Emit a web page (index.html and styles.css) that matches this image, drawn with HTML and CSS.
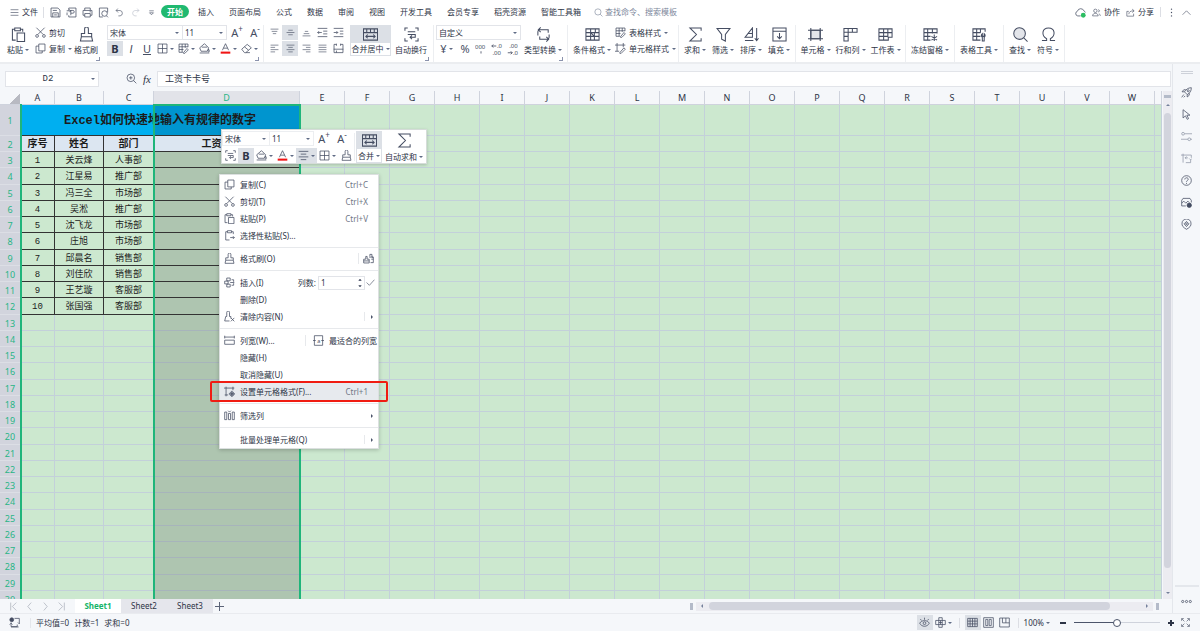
FILE: index.html
```html
<!DOCTYPE html>
<html lang="zh-CN">
<head>
<meta charset="utf-8">
<title>工作表</title>
<link rel="stylesheet" href="styles.css">
</head>
<body>
<svg class="defs" aria-hidden="true">
  <symbol id="menu" viewBox="0 0 16 16"><path d="M1 3h14M1 8h14M1 13h14"/></symbol>
  <symbol id="save" viewBox="0 0 16 16"><path d="M1.500 1.500h10l3 3v10h-13zM4 14.500v-6h8v6M4 5h6M6 11.500h4"/></symbol>
  <symbol id="export" viewBox="0 0 16 16"><path d="M4 5V1.500h10.500v13H4V12M1 5.500h6M5 3.500l2 2-2 2M7 12V5h3a2 2 0 010 4H7M1.500 8v4"/></symbol>
  <symbol id="print" viewBox="0 0 16 16"><path d="M4 5V1.500h8V5M4 12H1.500V5h13v7H12M4 9.500h8v5H4zM11 7h2"/></symbol>
  <symbol id="preview" viewBox="0 0 16 16"><path d="M7 14.500H2v-13h12V8M14.500 15l-2-2"/><circle cx="9.500" cy="9.500" r="4"/></symbol>
  <symbol id="undo" viewBox="0 0 16 16"><path d="M5 1L2 4.500 5.500 8M2 4.500h7a4.800 4.800 0 010 9.500H6"/></symbol>
  <symbol id="redo" viewBox="0 0 16 16"><path d="M11 1l3 3.500L10.500 8M14 4.500H7A4.800 4.800 0 007 14h3"/></symbol>
  <symbol id="more" viewBox="0 0 16 16"><path d="M4 5h8M4.500 8.500h7L8 12z"/></symbol>
  <symbol id="search" viewBox="0 0 16 16"><circle cx="7" cy="7" r="5.500"/><path d="M11 11l4 4"/></symbol>
  <symbol id="find" viewBox="0 0 16 16"><circle cx="7" cy="7" r="6.200" fill="#e3e5ea"/><path d="M11.500 11.500l4 4"/></symbol>
  <symbol id="zoomin" viewBox="0 0 16 16"><circle cx="7" cy="7" r="5.500"/><path d="M11 11l4 4M4.500 7h5M7 4.500v5"/></symbol>
  <symbol id="cloud" viewBox="0 0 16 16"><path d="M8 13H4a3.500 3.500 0 01-.5-6.800 5 5 0 019.500-.5A3.500 3.500 0 0115 8"/><circle cx="12" cy="12" r="3.500" fill="#2dbd62" stroke="none"/></symbol>
  <symbol id="people" viewBox="0 0 16 16"><circle cx="6" cy="5" r="3"/><path d="M1 14c0-6 10-6 10 0zM11 3c3 0 3 4 0 4M13 10l2 4"/></symbol>
  <symbol id="share" viewBox="0 0 16 16"><path d="M5 6H1.500v8.500h12V10M5 11c0-4 3-6 9-6M11 2l3.500 3L11 8"/></symbol>
  <symbol id="up" viewBox="0 0 16 16"><path d="M1 12l7-7 7 7"/></symbol>
  <symbol id="left" viewBox="0 0 16 16"><path d="M11 1L5 8l6 7"/></symbol>
  <symbol id="right" viewBox="0 0 16 16"><path d="M5 1l6 7-6 7"/></symbol>
  <symbol id="first" viewBox="0 0 16 16"><path d="M13 1L6 8l7 7M3 1v14"/></symbol>
  <symbol id="last" viewBox="0 0 16 16"><path d="M3 1l7 7-7 7M13 1v14"/></symbol>
  <symbol id="dots" viewBox="0 0 16 16"><g fill="currentColor" stroke="none"><circle cx="8" cy="2" r="1.200"/><circle cx="8" cy="8" r="1.200"/><circle cx="8" cy="14" r="1.200"/></g></symbol>
  <symbol id="hdots" viewBox="0 0 16 16"><circle cx="2.500" cy="8" r="1.600"/><circle cx="8" cy="8" r="1.600"/><circle cx="13.500" cy="8" r="1.600"/></symbol>
  <symbol id="paste" viewBox="0 0 16 16"><path d="M5 14H1.500V2.500H4M10 2.500h2.500V5M4 1h6v3H4zM6.500 6.500h8v9h-8z"/></symbol>
  <symbol id="paste2" viewBox="0 0 16 16"><path d="M8 14.500H2.500v-12H5M11 2.500h2.500V6M5 1h6v3H5zM9 11h6M13 9l2 2-2 2"/></symbol>
  <symbol id="cut" viewBox="0 0 16 16"><path d="M2 1l10 10M14 1L4 11"/><circle cx="3" cy="13" r="2"/><circle cx="13" cy="13" r="2"/></symbol>
  <symbol id="copy" viewBox="0 0 16 16"><path d="M5.500 1.500h9v10h-9zM5.500 4.500h-4v10h9v-3"/></symbol>
  <symbol id="brush" viewBox="0 0 16 16"><path d="M6 7V2a2 2 0 014 0v5h3.500v3.500h-11V7zM2.500 10.500L1.500 15h13l-1-4.500"/></symbol>
  <symbol id="brushes" viewBox="0 0 16 16"><path d="M4 9V5h2v4h3v5.500H1V9zM1 11.500h8M10 5V2h3v4h2v8h-4M9 6h6M12 9h3"/></symbol>
  <symbol id="borders" viewBox="0 0 16 16"><path d="M1.500 1.500h13v13h-13zM8 1.500v13M1.500 8h13"/></symbol>
  <symbol id="tablestyle" viewBox="0 0 16 16"><path d="M14.500 6V1.500h-13v12H7M1.500 5.500h13M1.500 9.500H8M6 1.500v12M10.500 1.500V7M8 14l5-6 2 2-5 5H8z"/></symbol>
  <symbol id="fill" viewBox="0 0 16 16"><path d="M8 1L1 7l2 5h9l2-5zM4 6h8M1 14.500h14M14 9c2 3 1 4 0 4s-1-2 0-4"/></symbol>
  <symbol id="fontcolor" viewBox="0 0 16 16"><path d="M3.500 10.500L8 1l4.500 9.500M5 7.500h6"/><path d="M1 14h14" stroke="#f01414" stroke-width="3"/></symbol>
  <symbol id="eraser" viewBox="0 0 16 16"><path d="M1 9l8-7 6 5-8 7H5zM5 5.500l6 5M7 14h6"/></symbol>
  <symbol id="al-top" viewBox="0 0 16 16"><path d="M1 2h14M3 6h10M5 10h6"/></symbol>
  <symbol id="al-mid" viewBox="0 0 16 16"><path d="M4 4h8M1 8h14M4 12h8"/></symbol>
  <symbol id="al-bot" viewBox="0 0 16 16"><path d="M5 6h6M3 10h10M1 14h14"/></symbol>
  <symbol id="al-left" viewBox="0 0 16 16"><path d="M1 2h14M1 6h8M1 10h14M1 14h8"/></symbol>
  <symbol id="al-center" viewBox="0 0 16 16"><path d="M1 2h14M4 6h8M1 10h14M4 14h8"/></symbol>
  <symbol id="al-right" viewBox="0 0 16 16"><path d="M1 2h14M7 6h8M1 10h14M7 14h8"/></symbol>
  <symbol id="al-just" viewBox="0 0 16 16"><path d="M1 2h14M1 6h14M1 10h14M1 14h14"/></symbol>
  <symbol id="spread" viewBox="0 0 16 16"><path d="M5 2H1.500v12h13V2H11M1 9h14M5 4V1M11 4V1M5 11v3"/></symbol>
  <symbol id="outdent" viewBox="0 0 16 16"><path d="M1 2h14M9 6h6M9 10h6M1 14h14M7 8H1M3 6L1 8l2 2"/></symbol>
  <symbol id="indent" viewBox="0 0 16 16"><path d="M1 2h14M10 6h5M10 10h5M1 14h14M1 8h6M5 6l2 2-2 2"/></symbol>
  <symbol id="merge" viewBox="0 0 16 16"><path d="M.5 2h15v12H.5zM.5 6h15M4 2v4M8 2v4M12 2v4M3 10h10M5 8l-2 2 2 2M11 8l2 2-2 2"/></symbol>
  <symbol id="wrap" viewBox="0 0 16 16"><path d="M4 1H1v3M12 1h3v3M4 15H1v-3M12 15h3v-3M4 5h8M4 8h8v3H7M8.500 9L6.500 11l2 2"/></symbol>
  <symbol id="comma" viewBox="0 0 16 16"><text x="0" y="8">000</text><path d="M8 11v3"/></symbol>
  <symbol id="decadd" viewBox="0 0 16 16"><text x="8" y="7">.0</text><text x="2" y="16">.00</text><path d="M7 4H1M3 2L1 4l2 2"/></symbol>
  <symbol id="decsub" viewBox="0 0 16 16"><text x="3" y="7">.00</text><text x="8" y="16">.0</text><path d="M1 13h6M5 11l2 2-2 2"/></symbol>
  <symbol id="convert" viewBox="0 0 16 16"><path d="M2 9V5a2 2 0 012-2h9V6M5 .5L2.500 3 5 5.500M14 8v3a2 2 0 01-2 2H4V10M11 10.500l2.500 2.500L11 15.500"/></symbol>
  <symbol id="condfmt" viewBox="0 0 16 16"><path d="M1 2h14v12H1zM1 6h14M1 10h14M6 2v12M11 2v4M10 10v4M6 6l4 4M10 6v4"/></symbol>
  <symbol id="cellstyle" viewBox="0 0 16 16"><path d="M3 0v12M0 3h15M12 0v6M0 12h6M7 14l6-7 2 2-6 6H7z"/></symbol>
  <symbol id="sigma" viewBox="0 0 16 16"><path d="M14 4V1H2l7 7-7 7h12v-3"/></symbol>
  <symbol id="filter" viewBox="0 0 16 16"><path d="M1 1.500h14L10 8v7l-4-2V8z"/></symbol>
  <symbol id="sort" viewBox="0 0 16 16"><path d="M9 1v10H1zM5 7h4M1 14.500h9M13.500 1v13M11.500 12l2 2.500 2-2.500"/></symbol>
  <symbol id="filldown" viewBox="0 0 16 16"><path d="M1 1h14v14H1zM1 4.500h14M8 6.500v6M5.500 10L8 12.500 10.500 10"/></symbol>
  <symbol id="cell" viewBox="0 0 16 16"><path fill="#e3e5ea" d="M3 3.500h10v9H3z"/><path d="M3 1v14M13 1v14M0 3.500h16M0 12.500h16"/></symbol>
  <symbol id="rowcol" viewBox="0 0 16 16"><path d="M1 1.500h14v4H5.500v9.500H1zM1 5.500h5M1 10h4.500M5.500 1.500v4M10 1.500v4"/></symbol>
  <symbol id="sheet" viewBox="0 0 16 16"><path d="M1 2h14v9h-4v3H1zM1 6h14M1 10h10M6 2v12M10.500 2v9"/></symbol>
  <symbol id="freeze" viewBox="0 0 16 16"><path d="M8 14H1V2h14v5M1 6h14M1 10h7M5 2v12M10 2v5M12 8v7M9 10l6 4M15 10l-6 4"/></symbol>
  <symbol id="tools" viewBox="0 0 16 16"><path d="M9 14H1V2h13v3M1 6h8M1 10h8M5 2v12M9 2v4M11 15v-4a2.500 2.500 0 010-4v3h2V7a2.500 2.500 0 010 4v4z"/></symbol>
  <symbol id="omega" viewBox="0 0 16 16"><path d="M1 14.500h5v-2C0 9 1 1 8 1s8 8 2 11.500v2h5"/></symbol>
  <symbol id="insert" viewBox="0 0 16 16"><path d="M4 1.500h5v4H4zM1 6h5v4H1zM4 10.500h5v4H4zM9 8h6M11 4h3v3M11 12h3V9"/></symbol>
  <symbol id="clear" viewBox="0 0 16 16"><path d="M4 8V2a2 2 0 014 0v6h2v3M1 14.500h7M1 14.500L2.500 8H4M10 10l5 5M15 10l-5 5"/></symbol>
  <symbol id="colw" viewBox="0 0 16 16"><path d="M1 1v4M15 1v4M1 3h14M1 7.500h14v6H1z"/></symbol>
  <symbol id="autofit" viewBox="0 0 16 16"><path d="M2 1h12v14H2zM0 8h4M12 8h4"/><text x="6" y="11">a</text></symbol>
  <symbol id="cellfmt" viewBox="0 0 16 16"><path d="M3 1v14M0 3h15M1 13h5M13 1v5"/><circle cx="11.500" cy="11.500" r="3"/><circle cx="11.500" cy="11.500" r="1"/><path d="M11.500 7v9M7 11.500h9"/></symbol>
  <symbol id="filtercol" viewBox="0 0 16 16"><path d="M1 3h3v11H1zM6.500 5h3v9h-3zM12 3h3v11h-3zM6 1l2 2 2-2"/></symbol>
  <symbol id="check" viewBox="0 0 16 16"><path d="M1 8l5 5 9-10"/></symbol>
  <symbol id="spin" viewBox="0 0 8 16"><path d="M2.500 4.500L4 3l1.500 1.500zM2.500 11.500L4 13l1.500-1.500z" fill="currentColor"/></symbol>
  <symbol id="rocket" viewBox="0 0 16 16"><path d="M15 1c-5 0-8 3-10 6l4 4c4-2 6-5 6-10zM5 7H1.500L4 4h3M9 11v3.500l3-2.500V9M1 15l3-4M4 15l2-2"/><circle cx="10.500" cy="5.500" r="1.500"/></symbol>
  <symbol id="cursor" viewBox="0 0 16 16"><path d="M3 1v12l3.500-3 2.500 5 2-1-2.500-5H13z"/></symbol>
  <symbol id="sliders" viewBox="0 0 16 16"><path d="M5 4h11M0 12h10"/><circle cx="3" cy="4" r="2"/><circle cx="12" cy="12" r="2"/><path d="M14 12h2"/></symbol>
  <symbol id="replace" viewBox="0 0 16 16"><path d="M3 1v13M0 3h15v4M6 7h4M8 5L6 7l2 2M14 10v4H7M12 8l2 2 2-2"/></symbol>
  <symbol id="help" viewBox="0 0 16 16"><circle cx="8" cy="8" r="7"/><path d="M5.500 6.500C5.500 3 11 3.500 10.500 6.500 10 8 8 8 8 10M8 11.500V13"/></symbol>
  <symbol id="picture" viewBox="0 0 16 16"><path d="M7 13H1V5l2-3h10l2 3v3M1 9l3-3 3 3 3-3 2 2"/><circle cx="12" cy="12" r="3.200" fill="currentColor"/></symbol>
  <symbol id="badge" viewBox="0 0 16 16"><path d="M8 15C3 12 1 10 1.500 6A6.500 6 0 0114.500 6C15 10 13 12 8 15zM8 3.500l3.500 3.500L8 11 4.500 7z"/><circle cx="8" cy="7" r="1.200"/></symbol>
  <symbol id="macro" viewBox="0 0 16 16"><circle cx="4" cy="4" r="2.800" fill="currentColor"/><path d="M8 2h7v8M13 8l2 2M3 8v6h9v-3M1 11l2-2 2 2M3 14.500h11"/></symbol>
  <symbol id="eye" viewBox="0 0 16 16"><path d="M1 9c3-5 11-5 14 0-3 6-11 6-14 0zM2 3l1.500 2M8 1v3M14 3l-1.500 2"/><circle cx="8" cy="9" r="2"/></symbol>
  <symbol id="cross" viewBox="0 0 16 16"><path d="M5.500 1h5v14h-5zM1 5h14v6H1zM8 5v6M5.500 8h5"/></symbol>
  <symbol id="view1" viewBox="0 0 16 16"><path d="M1 2h14v12H1zM1 6h14M1 10h14M4.500 2v12M8 2v12M11.500 2v12"/></symbol>
  <symbol id="view2" viewBox="0 0 16 16"><path d="M1 1h14v14H1zM4 3.500h3v9H4zM9 3.500h3v9H9z"/></symbol>
  <symbol id="view3" viewBox="0 0 16 16"><path d="M1 1.500h14v13H1zM5 1.500v7M10 1.500v7M5 8.500h10"/></symbol>
  <symbol id="full" viewBox="0 0 16 16"><path d="M1 5V1h4M11 1h4v4M15 11v4h-4M5 15H1v-4M1.500 1.500L6 6M14.500 1.500L10 6M14.500 14.500L10 10M1.500 14.500L6 10"/></symbol>
</svg>

<div class="app">
  <header class="tabs">
    <button class="file"><svg class="i9"><use href="#menu"/></svg>文件</button>
    <div class="quick">
      <button><svg class="i11"><use href="#save"/></svg></button>
      <button><svg class="i11"><use href="#export"/></svg></button>
      <button><svg class="i11"><use href="#print"/></svg></button>
      <button><svg class="i11"><use href="#preview"/></svg></button>
      <button><svg class="i9"><use href="#undo"/></svg></button>
      <button class="faint"><svg class="i9"><use href="#redo"/></svg></button>
      <button><svg class="i9"><use href="#more"/></svg></button>
    </div>
    <nav class="tablist">
      <button class="active">开始</button><button>插入</button><button>页面布局</button><button>公式</button><button>数据</button><button>审阅</button><button>视图</button><button>开发工具</button><button>会员专享</button><button>稻壳资源</button><button>智能工具箱</button>
    </nav>
    <label class="search"><svg class="i9"><use href="#search"/></svg><input placeholder="查找命令、搜索模板" aria-label="查找命令"></label>
    <div class="account">
      <button><svg class="i11"><use href="#cloud"/></svg></button>
      <button><svg class="i9"><use href="#people"/></svg>协作</button>
      <button><svg class="i9"><use href="#share"/></svg>分享</button>
      <span class="rule"></span>
      <button class="kebab"><svg class="i9"><use href="#dots"/></svg></button>
      <button><svg class="i9"><use href="#up"/></svg></button>
    </div>
  </header>

  <section class="ribbon">
    <div class="group clip corner">
      <button class="big w24"><svg class="i15"><use href="#paste"/></svg><span class="dd">粘贴</span></button>
      <div class="rows clip-rows">
        <button class="row"><svg class="i11"><use href="#cut"/></svg>剪切</button>
        <button class="row dd"><svg class="i11"><use href="#copy"/></svg>复制</button>
      </div>
      <button class="big w24"><svg class="i15"><use href="#brush"/></svg><span>格式刷</span></button>
    </div>
    <div class="group font corner">
      <div class="rows">
        <div class="line">
          <span class="pick w76"><select aria-label="字体"><option>宋体</option></select></span>
          <span class="pick w44"><select aria-label="字号"><option>11</option></select></span>
          <button class="tool w20 letter">A<sup>+</sup></button>
          <button class="tool letter">A<sup>-</sup></button>
        </div>
        <div class="line">
          <button class="tool on bold">B</button>
          <button class="tool letter italic">I</button>
          <button class="tool letter under">U</button>
          <button class="tool w21 dd"><svg class="i11"><use href="#borders"/></svg></button>
          <button class="tool w21 dd"><svg class="i11"><use href="#tablestyle"/></svg></button>
          <button class="tool w21 dd"><svg class="i11"><use href="#fill"/></svg></button>
          <button class="tool w21 dd"><svg class="i11"><use href="#fontcolor"/></svg></button>
          <button class="tool w21 dd"><svg class="i11"><use href="#eraser"/></svg></button>
        </div>
      </div>
    </div>
    <div class="group corner">
      <div class="rows">
        <div class="line">
          <button class="tool"><svg class="i9"><use href="#al-top"/></svg></button>
          <button class="tool on"><svg class="i9"><use href="#al-mid"/></svg></button>
          <button class="tool"><svg class="i9"><use href="#al-bot"/></svg></button>
          <button class="tool"><svg class="i11"><use href="#outdent"/></svg></button>
          <button class="tool"><svg class="i11"><use href="#indent"/></svg></button>
        </div>
        <div class="line">
          <button class="tool"><svg class="i9"><use href="#al-left"/></svg></button>
          <button class="tool on"><svg class="i9"><use href="#al-center"/></svg></button>
          <button class="tool"><svg class="i9"><use href="#al-right"/></svg></button>
          <button class="tool"><svg class="i9"><use href="#al-just"/></svg></button>
          <button class="tool"><svg class="i11"><use href="#spread"/></svg></button>
        </div>
      </div>
      <button class="big merge"><svg class="i15"><use href="#merge"/></svg><span class="dd">合并居中</span></button>
      <button class="big w40"><svg class="i15"><use href="#wrap"/></svg><span>自动换行</span></button>
    </div>
    <div class="group corner">
      <div class="rows">
        <div class="line"><span class="pick w85"><select aria-label="数字格式"><option>自定义</option></select></span></div>
        <div class="line">
          <button class="tool w21 dd letter">¥</button>
          <button class="tool letter">%</button>
          <button class="tool"><svg class="i12"><use href="#comma"/></svg></button>
          <button class="tool"><svg class="i12"><use href="#decadd"/></svg></button>
          <button class="tool"><svg class="i12"><use href="#decsub"/></svg></button>
        </div>
      </div>
      <button class="big w44"><svg class="i15"><use href="#convert"/></svg><span class="dd">类型转换</span></button>
    </div>
    <div class="group">
      <button class="big w44"><svg class="i15"><use href="#condfmt"/></svg><span class="dd">条件格式</span></button>
      <div class="rows style-rows">
        <button class="row dd"><svg class="i11"><use href="#tablestyle"/></svg>表格样式</button>
        <button class="row dd"><svg class="i11"><use href="#cellstyle"/></svg>单元格样式</button>
      </div>
    </div>
    <div class="group">
      <button class="big w28"><svg class="i15"><use href="#sigma"/></svg><span class="dd">求和</span></button>
      <button class="big w28"><svg class="i15"><use href="#filter"/></svg><span class="dd">筛选</span></button>
      <button class="big w28"><svg class="i15"><use href="#sort"/></svg><span class="dd">排序</span></button>
      <button class="big w28"><svg class="i15"><use href="#filldown"/></svg><span class="dd">填充</span></button>
    </div>
    <div class="group">
      <button class="big w35"><svg class="i15"><use href="#cell"/></svg><span class="dd">单元格</span></button>
      <button class="big w35"><svg class="i15"><use href="#rowcol"/></svg><span class="dd">行和列</span></button>
      <button class="big w35"><svg class="i15"><use href="#sheet"/></svg><span class="dd">工作表</span></button>
    </div>
    <div class="group"><button class="big w44"><svg class="i15"><use href="#freeze"/></svg><span class="dd">冻结窗格</span></button></div>
    <div class="group"><button class="big w44"><svg class="i15"><use href="#tools"/></svg><span class="dd">表格工具</span></button></div>
    <div class="group">
      <button class="big w28"><svg class="i15"><use href="#find"/></svg><span class="dd">查找</span></button>
      <button class="big w28"><svg class="i15"><use href="#omega"/></svg><span class="dd">符号</span></button>
    </div>
  </section>

  <div class="work">
    <main class="book">
      <div class="formula">
        <span class="pick namebox"><input value="D2" aria-label="名称框"></span>
        <button class="lens"><svg class="i11"><use href="#zoomin"/></svg></button>
        <button class="fx">fx</button>
        <input class="entry" value="工资卡卡号" aria-label="编辑栏">
      </div>
      <div class="canvas">
        <div class="grid">
          <table class="cells" id="cells"></table>
          <div class="selection"></div>
        </div>
        <div class="vbar">
          <span class="split"></span>
          <button class="arrow a-up" aria-label="向上"></button>
          <span class="thumb"></span>
          <button class="arrow a-down" aria-label="向下"></button>
        </div>
      </div>

      <div class="mini">
        <div class="rows">
          <div class="line">
            <span class="pick w48"><select aria-label="字体"><option>宋体</option></select></span>
            <span class="pick w44"><select aria-label="字号"><option>11</option></select></span>
            <button class="tool w20 letter">A<sup>+</sup></button>
            <button class="tool letter">A<sup>-</sup></button>
          </div>
          <div class="line">
            <button class="tool"><svg class="i11"><use href="#wrap"/></svg></button>
            <button class="tool on bold">B</button>
            <button class="tool w21 dd"><svg class="i11"><use href="#fill"/></svg></button>
            <button class="tool w21 dd"><svg class="i11"><use href="#fontcolor"/></svg></button>
            <button class="tool w21 dd on"><svg class="i11"><use href="#al-center"/></svg></button>
            <button class="tool w21 dd"><svg class="i11"><use href="#borders"/></svg></button>
            <button class="tool"><svg class="i11"><use href="#brush"/></svg></button>
          </div>
        </div>
        <span class="vline"></span>
        <button class="big merge"><svg class="i15"><use href="#merge"/></svg><span class="dd">合并</span></button>
        <button class="big w44"><svg class="i15"><use href="#sigma"/></svg><span class="dd">自动求和</span></button>
      </div>

      <div class="context" role="menu">
        <button class="item"><svg class="i11"><use href="#copy"/></svg>复制(C)<kbd>Ctrl+C</kbd></button>
        <button class="item"><svg class="i11"><use href="#cut"/></svg>剪切(T)<kbd>Ctrl+X</kbd></button>
        <button class="item"><svg class="i11"><use href="#paste"/></svg>粘贴(P)<kbd>Ctrl+V</kbd></button>
        <button class="item"><svg class="i11"><use href="#paste2"/></svg>选择性粘贴(S)...</button>
        <hr>
        <div class="item"><button class="item-main"><svg class="i11"><use href="#brush"/></svg>格式刷(O)</button><button class="side"><svg class="i11"><use href="#brushes"/></svg></button></div>
        <hr>
        <div class="item"><button class="item-main"><svg class="i11"><use href="#insert"/></svg>插入(I)</button><label class="count">列数:<span><input value="1"><svg class="spin"><use href="#spin"/></svg></span></label><button class="ok"><svg class="i9"><use href="#check"/></svg></button></div>
        <button class="item plain">删除(D)</button>
        <button class="item sub split"><svg class="i11"><use href="#clear"/></svg>清除内容(N)</button>
        <hr>
        <div class="item"><button class="item-main"><svg class="i11"><use href="#colw"/></svg>列宽(W)...</button><button class="fit"><svg class="i11"><use href="#autofit"/></svg>最适合的列宽</button></div>
        <button class="item plain">隐藏(H)</button>
        <button class="item plain">取消隐藏(U)</button>
        <button class="item marked"><svg class="i11"><use href="#cellfmt"/></svg>设置单元格格式(F)...<kbd>Ctrl+1</kbd></button>
        <hr>
        <button class="item sub"><svg class="i11"><use href="#filtercol"/></svg>筛选列</button>
        <hr>
        <button class="item sub split plain">批量处理单元格(Q)</button>
      </div>

      <footer class="sheets">
        <div class="nav">
          <button><svg class="i9"><use href="#first"/></svg></button><button><svg class="i9"><use href="#left"/></svg></button><button><svg class="i9"><use href="#right"/></svg></button><button><svg class="i9"><use href="#last"/></svg></button>
        </div>
        <button class="sheet current">Sheet1</button><button class="sheet">Sheet2</button><button class="sheet">Sheet3</button>
        <button class="add" aria-label="新建工作表"></button>
        <div class="hbar">
          <span class="grip"></span>
          <div class="track"><button class="arrow a-left" aria-label="向左"></button><span class="hthumb"></span><button class="arrow a-right" aria-label="向右"></button></div>
          <span class="grip"></span>
        </div>
      </footer>
    </main>
    <aside class="dock">
      <span class="handle"></span>
      <button><svg class="i11"><use href="#rocket"/></svg></button>
      <button><svg class="i11"><use href="#cursor"/></svg></button>
      <button class="soft"><svg class="i11"><use href="#sliders"/></svg></button>
      <button class="soft"><svg class="i11"><use href="#replace"/></svg></button>
      <button><svg class="i11"><use href="#help"/></svg></button>
      <button><svg class="i11"><use href="#picture"/></svg></button>
      <button><svg class="i11"><use href="#badge"/></svg></button>
      <button class="last"><svg class="i11"><use href="#hdots"/></svg></button>
    </aside>
  </div>

  <footer class="status">
    <button class="macro"><svg class="i11"><use href="#macro"/></svg></button>
    <div class="sums"><span>平均值=0</span><span>计数=1</span><span>求和=0</span></div>
    <div class="views">
      <button class="tool on"><svg class="i11"><use href="#eye"/></svg></button>
      <button class="tool w21 dd"><svg class="i11"><use href="#cross"/></svg></button>
      <span class="rule"></span>
      <button class="tool on"><svg class="i11"><use href="#view1"/></svg></button>
      <button class="tool"><svg class="i11"><use href="#view2"/></svg></button>
      <button class="tool"><svg class="i11"><use href="#view3"/></svg></button>
      <span class="rule"></span>
      <button class="dd percent">100%</button>
      <button class="minus" aria-label="缩小"></button>
      <input type="range" class="zoom" min="0" max="200" value="100" aria-label="缩放">
      <button class="plus" aria-label="放大"></button>
      <button class="fullscreen"><svg class="i9"><use href="#full"/></svg></button>
    </div>
  </footer>
</div>
<script src="script.js"></script>
</body>
</html>
```
FILE: styles.css
```css
* { box-sizing: border-box; }
body {
  margin: 0;
  font: 8px/14px "Noto Sans", "Noto Sans CJK SC", sans-serif;
  color: #2d3446;
  background: #fff;
}
button, input, select { font: inherit; color: inherit; border: 0; background: none; padding: 0; margin: 0; }
button { display: flex; align-items: center; white-space: nowrap; }
svg { fill: none; stroke: currentColor; stroke-width: 1.1; flex: none; color: #454d62; overflow: visible; }
svg text { font: 8px "Noto Sans", sans-serif; fill: currentColor; stroke: none; }
.defs { display: none; }
.i9 { width: 9px; height: 9px; }
.i11 { width: 11px; height: 11px; }
.i12 { width: 12px; height: 12px; }
.i15 { width: 15px; height: 15px; }
.app { display: flex; flex-direction: column; height: 100vh; overflow: hidden; }
.rule { width: 1px; height: 10px; background: #dcdee4; }
.dd::after {
  content: "";
  border: 2px solid transparent;
  border-top-color: #5f6b85;
  border-bottom: 0;
  margin-left: 2px;
  flex: none;
}

/* tab strip */
.tabs { display: flex; align-items: center; height: 24px; flex: none; padding-left: 10px; }
.file { gap: 3px; padding-right: 5px; border-right: 1px solid #dcdee4; height: 11px; }
.quick { display: flex; margin-left: 3px; }
.quick button { width: 16px; justify-content: center; }
.quick .faint svg { color: #b9bec9; }
.tablist { display: flex; gap: 15px; margin-left: 2px; }
.tablist .active { height: 13px; padding: 0 6px; border-radius: 7px; background: #20b970; color: #fff; font-weight: 700; margin-right: -6px; }
.search { display: flex; align-items: center; gap: 2px; margin-left: 13px; }
.search svg, .search input::placeholder { color: #7d879b; opacity: 1; }
.search input { width: 80px; }
.account { display: flex; align-items: center; margin-left: auto; margin-right: 9px; gap: 6px; }
.account button { gap: 3px; }

/* ribbon */
.ribbon { display: flex; flex: none; height: 40px; padding-top: 1px; border-bottom: 2px solid #ebedf0; }
.group { position: relative; display: flex; align-items: flex-start; height: 37px; padding: 0 2px; border-right: 1px solid #eceef1; flex: none; }
.clip { padding: 0 6px; border-right-color: transparent; }
.font { padding-right: 0; }
.corner::after { content: ""; position: absolute; right: 4px; bottom: 1px; width: 3px; height: 3px; border: solid #8b93ad; border-width: 0 1px 1px 0; }
.rows { display: grid; grid-template-rows: 15px 15px; row-gap: 1px; }
.line { display: flex; }
.row { gap: 3px; }
.row.dd::after { margin-left: 0; }
.clip-rows { width: 44px; padding-left: 5px; }
.style-rows { width: 62px; padding-left: 1px; }
.big { flex-direction: column; height: 31px; justify-content: space-between; padding-top: 2px; }
.big span { display: flex; align-items: center; line-height: 13px; }
.w20 { width: 20px; }
.w21 { width: 21px; }
.w24 { width: 24px; }
.w28 { width: 28px; }
.w35 { width: 35px; }
.w40 { width: 40px; }
.w44 { width: 44px; }
.w48 { width: 48px; }
.w76 { width: 76px; }
.w85 { width: 85px; }
.tool { height: 15px; justify-content: center; flex: none; }
.tool:not(.w20, .w21) { width: 16px; }
.on { background: #dce0e6; }
.bold { font-size: 11px; font-weight: 700; }
.letter { font-size: 11px; color: #454d62; }
.letter sup { font-size: 8px; line-height: 8px; align-self: flex-start; }
.italic { font-family: "Liberation Sans", sans-serif; font-style: italic; }
.under { text-decoration: underline; }
.merge { width: 41px; margin-left: 4px; border: 1px solid #dce0e6; background: linear-gradient(#dce0e6 17px, #fff 17px); padding-top: 1px; }
.merge span { line-height: 12px; }
.pick { position: relative; display: block; height: 15px; border: 1px solid #e2e4e9; background: #fff; }
.pick + .pick { border-left: 0; }
.pick select, .pick input { display: block; width: 100%; height: 13px; padding: 0 2px; appearance: none; outline: 0; }
.pick::after { content: ""; position: absolute; right: 3px; top: 6px; border: 2px solid transparent; border-top-color: #5f6b85; border-bottom: 0; }

/* workspace */
.work { display: flex; flex: 1; min-height: 0; background: #f5f7fa; }
.book { position: relative; display: flex; flex-direction: column; flex: 1; min-width: 0; }
.formula { display: flex; align-items: center; height: 27px; padding: 2px 1px 0 5px; flex: none; }
.formula .namebox { width: 94px; height: 16px; }
.namebox input { height: 14px; text-align: center; padding-right: 10px; font: 9px/14px "Liberation Mono", monospace; }
.lens { margin-left: 27px; }
.fx { margin: 0 6px; font: italic 11px "Liberation Serif", serif; }
.entry { flex: 1; height: 16px; background: #fff; border: 1px solid #e2e4e9; padding: 0 7px; font: 9px/14px "Liberation Mono", "Noto Sans CJK SC", monospace; }
.canvas { display: flex; flex: 1; min-height: 0; }
.grid { position: relative; flex: 1; min-width: 0; overflow: hidden; background: #cce8cf; }
.cells { width: 100%; table-layout: fixed; border-spacing: 0; font: 9px/12px "Liberation Mono", "Noto Sans CJK SC", monospace; text-align: center; }
.cells th, .cells td { padding: 2px 0 0; height: 16px; overflow: hidden; white-space: nowrap; border: solid #c3d0da; border-width: 0 1px 1px 0; color: #1c1c1c; }
.cells .tall th, .cells .tall td { height: 17px; }
.cells thead th { height: 14px; padding-top: 1px; background: #f5f7fa; font: 9px/12px "Noto Sans", sans-serif; border-color: #cfd3dd; color: #2d3446; }
.cells thead th.picked { background: #e2e3e9; color: #29b586; }
.cells thead th.all { background: linear-gradient(135deg, #f5f7fa 67%, #b8bac2 67%); border-right-color: #f5f7fa; }
.cells tbody th { background: #d2d4dd; color: #29b586; font: 9px/12px "Noto Sans", sans-serif; border-color: #dcdee5; }
.cells .title th, .cells .title td { height: 31px; }
.cells .title .banner { background: linear-gradient(90deg, #00aff0 133px, #0095cf 133px); font-size: 12px; font-weight: 700; border-color: #333; }
.cells .data td.rec { border-color: #333; }
.cells .heads td.rec { background: #dce6f1; font-size: 10px; font-weight: 700; }
.cells td.picked { background: #aec5b0; border-color: #a7b4bb; }
.cells .num { width: 21px; } .cells .a { width: 34px; } .cells .b { width: 49px; } .cells .c { width: 50px; } .cells .d { width: 146px; } .cells .e { width: 45px; }
.selection { position: absolute; left: 20px; top: 13px; bottom: 0; width: 281px; border: solid #1fb57a; border-width: 0 2px; }
.selection::before { content: ""; position: absolute; left: 131px; right: -2px; top: 0; bottom: 0; border: solid #1fb57a; border-width: 2px 0 0 2px; }
.vbar { display: flex; flex-direction: column; align-items: center; width: 10px; background: #ececf1; border-left: 1px solid #f5f7fa; flex: none; }
.vbar .split { width: 7px; height: 3px; margin: 4px 0 4px; background: #b4bbc9; }
.thumb { width: 7px; flex: 1; margin-bottom: 24px; border-radius: 4px; background: #d2d4dd; }
.arrow { width: 0; height: 0; border: 2px solid transparent; flex: none; }
.a-up { border-top: 0; border-bottom-color: #74809b; margin: 2px 0 7px; }
.a-down { border-bottom: 0; border-top-color: #74809b; margin-bottom: 5px; }
.a-left { border-left: 0; border-right-color: #74809b; }
.a-right { border-right: 0; border-left-color: #74809b; }

/* floating toolbar */
.mini { position: absolute; left: 221px; top: 65px; display: flex; padding: 1px 0 0; background: #fff; border: 1px solid #d5dcd9; box-shadow: 0 1px 3px #00000030; }
.mini .merge { width: 26px; margin-left: 1px; }
.mini .pick { border-color: #eceef1; }
.mini .rows { grid-template-rows: 16px 15px; }
.vline { width: 1px; margin: 2px 0; background: #eceef1; }
.mini .big { height: 32px; }

/* context menu */
.context { position: absolute; left: 219px; top: 110px; width: 160px; padding-top: 1px; background: #fff; border: 1px solid #dce0e0; box-shadow: 0 1px 4px #00000038; }
.item { position: relative; display: flex; align-items: center; width: 100%; height: 17px; padding: 0 5px 0 4px; }
.item > svg, .item-main svg { margin-right: 5px; }
.item-main { margin-right: auto; }
.plain { padding-left: 20px; }
.item kbd { margin-left: auto; margin-right: 5px; font: inherit; color: #6f7686; }
.context hr { margin: 3px 0; border: 0; height: 1px; background: #e7e9ec; }
.context hr:first-of-type { margin-bottom: 2px; }
.side { border-left: 1px solid #e7e9ec; padding-left: 4px; height: 11px; }
.side svg { margin-right: -1px; }
.count { display: flex; align-items: center; gap: 2px; margin-right: 1px; }
.count span { display: flex; align-items: center; width: 47px; height: 14px; border: 1px solid #e2e4e9; }
.count input { width: 38px; padding-left: 2px; outline: 0; }
.ok { margin-right: -2px; }
.spin { width: 6px; height: 12px; }
.fit { gap: 5px; border-left: 1px solid #e7e9ec; padding-left: 7px; height: 11px; margin-right: -4px; }
.sub::after { content: ""; margin-left: auto; border: 2px solid transparent; border-left-color: #4c556b; border-right: 0; }
.context .split::before { content: ""; position: absolute; right: 13px; top: 4px; width: 1px; height: 9px; background: #e7e9ec; }
.marked { background: #e7eaee; }
.marked::after { content: ""; position: absolute; inset: -2px -10px; border: 2px solid #f01c12; border-radius: 2px; }

/* sheet tabs */
.sheets { display: flex; height: 14px; flex: none; }
.nav { display: flex; width: 75px; padding-left: 5px; }
.nav button { width: 16px; justify-content: center; }
.nav svg { color: #9ca2ae; }
.sheet { width: 46px; justify-content: center; background: #e5e6ec; }
.current { background: #fff; color: #14b468; font-weight: 700; }
.add { width: 9px; margin-left: 2px; background: linear-gradient(#5b6478, #5b6478) center / 9px 1px no-repeat, linear-gradient(#5b6478, #5b6478) center / 1px 9px no-repeat; }
.hbar { display: flex; align-items: center; width: 40%; margin-left: auto; margin-right: 13px; gap: 3px; }
.grip { width: 3px; height: 7px; background: #b4bbc9; }
.track { display: flex; align-items: center; flex: 1; height: 9px; padding: 0 5px; background: #ececf1; }
.hthumb { flex: 1; height: 8px; margin: 0 36px 0 6px; border-radius: 4px; background: #d2d4dd; }

/* side dock */
.dock { display: flex; flex-direction: column; align-items: center; width: 28px; gap: 11px; padding-top: 7px; border-left: 1px solid #e4e7ec; flex: none; }
.handle { width: 12px; height: 3px; border: solid #cdd1d9; border-width: 1px 0; margin-bottom: 2px; }
.dock .soft svg { color: #9097a7; }
.dock .last { width: 24px; justify-content: center; margin-top: auto; padding: 9px 0 6px; border-top: 2px solid #e4e7ec; }

/* status bar */
.status { display: flex; align-items: center; height: 18px; flex: none; padding: 0 10px 0 9px; background: #f5f7fa; border-top: 1px solid #e9ebef; }
.macro { padding-right: 10px; border-right: 1px solid #e4e7ec; height: 10px; }
.sums { display: flex; gap: 5px; margin-left: 5px; }
.views { display: flex; align-items: center; margin-left: auto; }
.views .rule { margin: 0 5px; }
.percent { margin-right: 10px; }
.minus, .plus { width: 6px; height: 6px; background: linear-gradient(#2d3446, #2d3446) center / 6px 2px no-repeat; }
.plus { background: linear-gradient(#2d3446, #2d3446) center / 6px 2px no-repeat, linear-gradient(#2d3446, #2d3446) center / 2px 6px no-repeat; }
.zoom { width: 86px; height: 9px; margin: 0 8px; appearance: none; background: linear-gradient(90deg, #4c556b 50%, #cfd3dc 50%) center / 100% 1px no-repeat; }
.zoom::-webkit-slider-thumb { appearance: none; width: 8px; height: 8px; border: 1px solid #4c556b; border-radius: 50%; background: #fff; }
.fullscreen { margin-left: 7px; }
```
FILE: script.js
```js
const names = ["关云烽", "江星易", "冯三全", "吴淞", "沈飞龙", "庄旭", "邱晨名", "刘佳欣", "王艺璇", "张国强"];
const depts = ["人事部", "推广部", "市场部", "推广部", "市场部", "市场部", "销售部", "销售部", "客服部", "客服部"];
const letters = "ABCDEFGHIJKLMNOPQRSTUVW".split("");
const widths = ["a", "b", "c", "d"];

const head = letters.map((l, i) =>
  `<th class="${widths[i] || "e"}${l === "D" ? " picked" : ""}">${l}</th>`).join("");

function cells(from, row) {
  let html = "";
  for (let c = from; c < letters.length + 1; c++) {
    html += `<td${c === 3 && row > 2 ? ' class="picked"' : ""}></td>`;
  }
  return html;
}

let body = `<tr class="title"><th>1</th><td class="banner" colspan="4">Excel如何快速地输入有规律的数字</td>${cells(4, 1)}</tr>`;
for (let r = 2; r <= 30; r++) {
  const record = r === 2 ? ["序号", "姓名", "部门", "工资卡卡号"]
    : r <= 12 ? [r - 2, names[r - 3], depts[r - 3], ""] : [];
  const filled = record.map((v, i) =>
    `<td class="rec${i === 3 && r > 2 ? " picked" : ""}">${v}</td>`).join("");
  const kind = (r === 2 ? "heads " : "") + (r <= 12 ? "data " : "") + (r % 4 === 0 ? "tall" : "");
  body += `<tr class="${kind}"><th>${r}</th>${filled}${cells(record.length, r)}</tr>`;
}

document.getElementById("cells").innerHTML =
  `<thead><tr><th class="num all"></th>${head}<th></th></tr></thead><tbody>${body}</tbody>`;
```
